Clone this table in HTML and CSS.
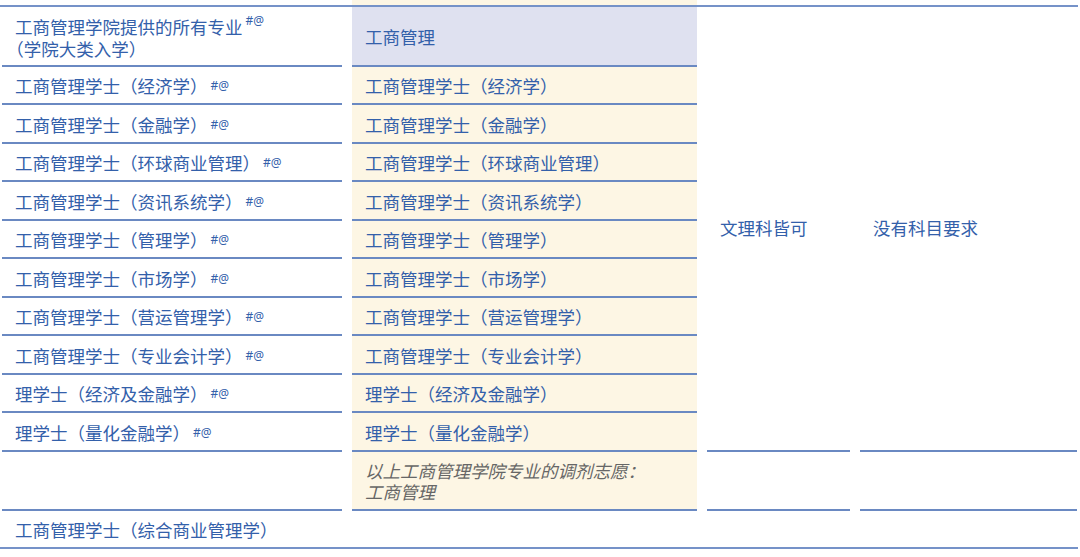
FILE: index.html
```html
<!DOCTYPE html>
<html lang="zh-CN">
<head>
<meta charset="utf-8">
<title>工商管理学院专业</title>
<link rel="stylesheet" href="styles.css">
</head>
<body>
<div class="sheet">
  <div class="strip">
    <div></div><div class="cream"></div><div></div><div></div>
  </div>
  <div class="rule"></div>
  <div class="table">
    <div class="cell c1 two">
      <div>工商管理学院提供的所有专业<span class="sup">#@</span><br><span class="trim">（</span>学院大类入学）</div>
    </div>
    <div class="cell c2 head">工商管理</div>
    <div class="cell c3 span">文理科皆可</div>
    <div class="cell c4 span">没有科目要求</div>

    <div class="cell c1">工商管理学士（经济学）<span class="sup">#@</span></div>
    <div class="cell c2 cream">工商管理学士（经济学）</div>

    <div class="cell c1">工商管理学士（金融学）<span class="sup">#@</span></div>
    <div class="cell c2 cream">工商管理学士（金融学）</div>

    <div class="cell c1">工商管理学士（环球商业管理）<span class="sup">#@</span></div>
    <div class="cell c2 cream">工商管理学士（环球商业管理）</div>

    <div class="cell c1">工商管理学士（资讯系统学）<span class="sup">#@</span></div>
    <div class="cell c2 cream">工商管理学士（资讯系统学）</div>

    <div class="cell c1">工商管理学士（管理学）<span class="sup">#@</span></div>
    <div class="cell c2 cream">工商管理学士（管理学）</div>

    <div class="cell c1">工商管理学士（市场学）<span class="sup">#@</span></div>
    <div class="cell c2 cream">工商管理学士（市场学）</div>

    <div class="cell c1">工商管理学士（营运管理学）<span class="sup">#@</span></div>
    <div class="cell c2 cream">工商管理学士（营运管理学）</div>

    <div class="cell c1">工商管理学士（专业会计学）<span class="sup">#@</span></div>
    <div class="cell c2 cream">工商管理学士（专业会计学）</div>

    <div class="cell c1">理学士（经济及金融学）<span class="sup">#@</span></div>
    <div class="cell c2 cream">理学士（经济及金融学）</div>

    <div class="cell c1">理学士（量化金融学）<span class="sup">#@</span></div>
    <div class="cell c2 cream">理学士（量化金融学）</div>

    <div class="cell c1"></div>
    <div class="cell c2 cream note"><div><div>以上工商管理学院专业的调剂志愿：</div><div>工商管理</div></div></div>
    <div class="cell c3"></div>
    <div class="cell c4"></div>

    <div class="cell c1 last">工商管理学士（综合商业管理学）</div>
    <div class="cell c2 last"></div>
    <div class="cell c3 last"></div>
    <div class="cell c4 last"></div>
  </div>
  <div class="rule"></div>
</div>
</body>
</html>
```

FILE: styles.css
```css
html, body {
  margin: 0;
  padding: 0;
  background: #ffffff;
}

body {
  font-family: "Noto Sans CJK SC", "Noto Sans", sans-serif;
  font-size: 17.5px;
  color: #3360aa;
  text-spacing-trim: space-all;
}

.sheet {
  width: 1078px;
}

.strip {
  display: grid;
  grid-template-columns: 340px 345px 143px 217px;
  column-gap: 10px;
  padding-left: 2px;
  height: 5px;
}

.cream {
  background: #fdf6e4;
}

.rule {
  height: 2px;
  background: #7592c8;
}

.table {
  display: grid;
  grid-template-columns: 340px 345px 143px 217px;
  grid-template-rows: 60px 38px 39px 38px 39px 38px 39px 38px 39px 38px 39px 59px 36px;
  column-gap: 10px;
  padding-left: 2px;
}

.cell {
  box-sizing: border-box;
  display: flex;
  align-items: center;
  padding: 2px 13px 0;
  border-bottom: 2px solid #6a89c2;
  line-height: 22px;
  white-space: nowrap;
}

.cell.last {
  border-bottom: none;
}

.c1 { grid-column: 1; }
.c2 { grid-column: 2; }
.c3 { grid-column: 3; }
.c4 { grid-column: 4; }

.span {
  grid-row: 1 / span 11;
  padding: 0 13px 2px;
}

.head {
  background: #dfe1f0;
}

.two {
  padding-top: 4px;
}

.trim {
  display: inline-block;
  margin-left: -0.5em;
}

.sup {
  font-family: "Noto Sans", sans-serif;
  font-size: 12px;
  line-height: 0;
  vertical-align: 9px;
  margin-left: 3px;
}

.note {
  color: #666666;
  font-style: italic;
  line-height: 20.5px;
}
```
